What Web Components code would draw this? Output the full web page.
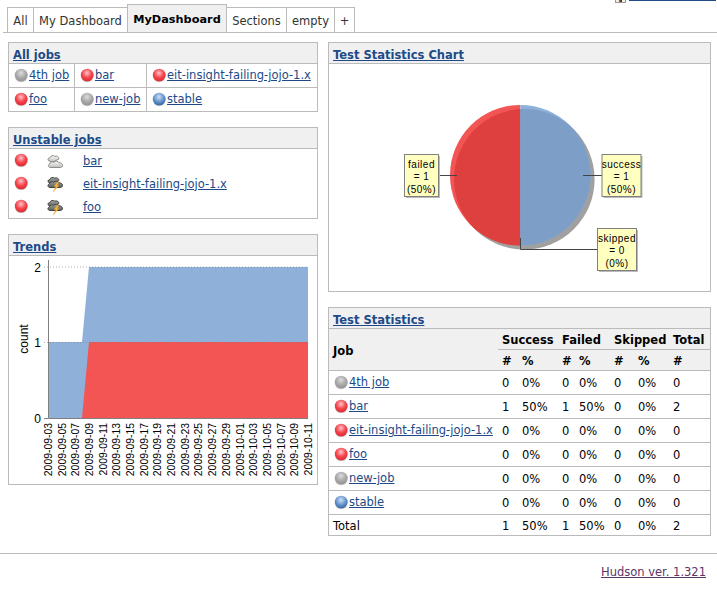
<!DOCTYPE html>
<html><head><meta charset="utf-8"><title>MyDashboard</title>
<style>
html,body{margin:0;padding:0;background:#fff;overflow:hidden}
body{font:11.5px "DejaVu Sans",sans-serif;color:#000;--link:#204a87;--line:#bbb;--head:#f0f0f0}
</style></head>
<body>
<hudson-page></hudson-page>
<script>
const BALLS={red:['#ffc4c8','#f6464e','#e0242c'],grey:['#dcdcdc','#ababab','#929292'],blue:['#cfe0f5','#6a98d0','#2f62a6']};
let uid=0;
function ball(c){const[a,b,d]=BALLS[c];const id='b'+(uid++);
return `<svg class="ball" width="16" height="16" viewBox="0 0 16 16"><defs><radialGradient id="${id}" cx=".48" cy=".34" r=".68"><stop offset="0" stop-color="${a}"/><stop offset=".55" stop-color="${b}"/><stop offset="1" stop-color="${d}"/></radialGradient></defs><ellipse cx="8.2" cy="9" rx="6.5" ry="6.2" fill="#888" opacity=".5"/><circle cx="8.2" cy="8" r="6.3" fill="url(#${id})"/></svg>`;}
class HBall extends HTMLElement{connectedCallback(){this.attachShadow({mode:'open'}).innerHTML=`<style>:host{display:inline-block;width:16px;height:16px;vertical-align:middle}svg{display:block}</style>${ball(this.getAttribute('color'))}`;}}
class HWeather extends HTMLElement{connectedCallback(){const storm=this.getAttribute('kind')==='storm';
const top=storm?'#a4a4a2':'#fbfbfb',bot=storm?'#5c5c5a':'#bcbcb8',st=storm?'#454543':'#8c8c88';
const cloud=storm
?`<path d="M2 6.8C.4 6 .8 3.6 2.8 3.6 3.4 1.4 6.4.7 7.8 2.2 9.8 1.2 12.2 2.6 11.8 4.8L6 8Z" fill="url(#c)" stroke="${st}"/><path d="M3 11.5C.8 11.5.2 8.8 2.2 8 2.6 6 5.2 5.2 6.6 6.4 8 4.6 11 5 11.6 6.8 13.6 6.4 15.8 7.8 15.5 9.8 15.3 10.9 14.4 11.5 13.4 11.5Z" fill="url(#c)" stroke="${st}"/><path d="M10 6.4 7 10.6 9 10.6 6.2 15.8 12 9.4 10 9.4 11.8 6.4Z" fill="#f8b838" stroke="#e09a20" stroke-width=".4"/>`
:`<path d="M2 8C.4 7.2.8 4.8 2.8 4.8 3.4 2.6 6.4 1.9 7.8 3.4 9.8 2.4 12.2 3.8 11.8 6L6 9Z" fill="url(#c)" stroke="${st}"/><path d="M3.4 14.5C1.2 14.5.6 11.8 2.6 11 3 9 5.6 8.2 7 9.4 8.4 7.6 11.4 8 12 9.8 13.8 9.4 15.8 10.8 15.5 12.8 15.3 13.9 14.4 14.5 13.4 14.5Z" fill="url(#c)" stroke="${st}"/>`;
this.attachShadow({mode:'open'}).innerHTML=`<style>:host{display:inline-block;width:16px;height:16px;vertical-align:middle}svg{display:block}</style>
<svg width="16" height="16" viewBox="0 0 16 16"><defs><linearGradient id="c" x1="0" y1="0" x2="0" y2="1"><stop offset="0" stop-color="${top}"/><stop offset="1" stop-color="${bot}"/></linearGradient></defs>${cloud}</svg>`;}}
class HPortlet extends HTMLElement{connectedCallback(){this.attachShadow({mode:'open'}).innerHTML=`<style>
:host{display:block;border:1px solid var(--line);box-sizing:border-box;background:#fff}
header{height:20px;line-height:24px;background:var(--head);border-bottom:1px solid var(--line);padding:0 4px;font-weight:bold}
a{color:var(--link)}
</style><header><a href="#">${this.getAttribute('title')}</a></header><slot></slot>`;}}
class HTabs extends HTMLElement{connectedCallback(){
const tabs=[['All',26],['My Dashboard',94],['MyDashboard',100,1],['Sections',60],['empty',48],['+',21]];
this.attachShadow({mode:'open'}).innerHTML=`<style>
:host{display:flex;align-items:flex-end;height:28px;margin:1px 0 0 3px;padding-left:4px;border-bottom:1px solid var(--line);box-sizing:content-box;color:#333}
div{box-sizing:border-box;height:25px;line-height:27px;text-align:center;border:1px solid var(--line);border-bottom:0;border-right:0}
div:last-child{border-right:1px solid var(--line)}
div.on{height:28px;line-height:30px;background:var(--head);font-weight:bold;font-size:11.3px;color:#000;border:1px solid var(--line);border-bottom:0;margin-right:-1px;position:relative}
</style>${tabs.map(t=>`<div class="${t[2]?'on':''}" style="width:${t[1]}px">${t[0]}</div>`).join('')}`;}}
const CS=`a{color:var(--link)}table{border-collapse:separate;border-spacing:0;width:100%;table-layout:fixed}td,th{padding:0 4px;box-sizing:border-box;white-space:nowrap;overflow:visible}hudson-ball{margin-top:-1px}`;
class HJobGrid extends HTMLElement{connectedCallback(){
const rows=[[['grey','4th job'],['red','bar'],['red','eit-insight-failing-jojo-1.x']],[['red','foo'],['grey','new-job'],['blue','stable']]];
this.attachShadow({mode:'open'}).innerHTML=`<style>:host{display:block}${CS}
td{height:24px;border-bottom:1px solid var(--line);border-right:1px solid var(--line)}
td:last-child{border-right:0}tr:last-child td{border-bottom:0;height:23px}
</style><table><colgroup><col style="width:66px"><col style="width:72px"><col></colgroup>${rows.map(r=>`<tr>${r.map(c=>`<td><hudson-ball color="${c[0]}"></hudson-ball><a href="#">${c[1]}</a></td>`).join('')}</tr>`).join('')}</table>`;}}
class HUnstable extends HTMLElement{connectedCallback(){
const rows=[['cloud','bar'],['storm','eit-insight-failing-jojo-1.x'],['storm','foo']];
this.attachShadow({mode:'open'}).innerHTML=`<style>:host{display:block}${CS}td{height:23px}</style><table><colgroup><col style="width:34px"><col style="width:36px"><col></colgroup>${rows.map(r=>`<tr><td><hudson-ball color="red"></hudson-ball></td><td><hudson-weather kind="${r[0]}"></hudson-weather></td><td><a href="#">${r[1]}</a></td></tr>`).join('')}</table>`;}}
class HStats extends HTMLElement{connectedCallback(){
const z=['0','0%','0','0%','0','0%','0'];
const rows=[['grey','4th job',z],['red','bar',['1','50%','1','50%','0','0%','2']],['red','eit-insight-failing-jojo-1.x',z],['red','foo',z],['grey','new-job',z],['blue','stable',z]];
this.attachShadow({mode:'open'}).innerHTML=`<style>:host{display:block}${CS}
th{background:var(--head);text-align:left;height:21px;padding-top:2px;border-bottom:1px solid var(--line)}
td{height:24px;border-bottom:1px solid var(--line)}
tr.total td{height:20px;padding-top:2px;border-bottom:0}
th.job{height:42px;padding-top:3px}
</style><table><colgroup><col style="width:169px"><col style="width:20px"><col style="width:40px"><col style="width:17px"><col style="width:35px"><col style="width:24px"><col style="width:35px"><col></colgroup>
<tr><th rowspan="2" class="job">Job</th><th colspan="2">Success</th><th colspan="2">Failed</th><th colspan="2">Skipped</th><th>Total</th></tr>
<tr><th>#</th><th>%</th><th>#</th><th>%</th><th>#</th><th>%</th><th>#</th></tr>
${rows.map(r=>`<tr><td><hudson-ball color="${r[0]}"></hudson-ball><a href="#">${r[1]}</a></td>${r[2].map(v=>`<td>${v}</td>`).join('')}</tr>`).join('')}
<tr class="total"><td>Total</td>${['1','50%','1','50%','0','0%','2'].map(v=>`<td>${v}</td>`).join('')}</tr></table>`;}}
class HTrend extends HTMLElement{connectedCallback(){
const d=[];for(let i=3;i<=29;i+=2)d.push('2009-09-'+String(i).padStart(2,'0'));for(let i=1;i<=11;i+=2)d.push('2009-10-'+String(i).padStart(2,'0'));
this.attachShadow({mode:'open'}).innerHTML=`<style>:host{display:block}svg{display:block}text{font-family:"Liberation Sans",sans-serif;fill:#000}</style>
<svg width="308" height="228" viewBox="9 256 308 228">
<polygon points="48,342 82,342 89,267 308,267 308,418 48,418" fill="#8fb0d9"/>
<polygon points="82,418 89,342 308,342 308,418" fill="#f35555"/>
<path d="M44 267H89M44 342.5H308M89 267H308" stroke="#777" stroke-dasharray="1 2" fill="none" stroke-width=".7" opacity=".8"/>
<path d="M48.5 260V418.5H308" stroke="#808080" fill="none"/>
<path d="M44 418.5H48" stroke="#808080"/>
<g font-size="12"><text x="41" y="272" text-anchor="end">2</text><text x="41" y="347" text-anchor="end">1</text><text x="41" y="423" text-anchor="end">0</text></g>
<text transform="translate(28,339) rotate(-90)" text-anchor="middle" font-size="12">count</text>
<g font-size="10.4">${d.map((s,i)=>`<text transform="translate(${(52+i*13.68).toFixed(2)},423) rotate(-90)" text-anchor="end">${s}</text>`).join('')}</g>
</svg>`;}}
class HPie extends HTMLElement{connectedCallback(){
const lab=(x,y,w,h,ls)=>`<rect x="${x+2}" y="${y+2}" width="${w}" height="${h}" fill="#bbb"/><rect x="${x+.5}" y="${y+.5}" width="${w}" height="${h}" fill="#ffffc0" stroke="#808080"/>`+ls.map((t,i)=>`<text x="${x+w/2+.5}" y="${y+13.5+i*12.5}" text-anchor="middle">${t}</text>`).join('');
this.attachShadow({mode:'open'}).innerHTML=`<style>:host{display:block}svg{display:block}text{font-family:"Liberation Sans",sans-serif;font-size:10px;letter-spacing:.5px;fill:#000}</style>
<svg width="381" height="227" viewBox="329 64 381 227">
<defs><clipPath id="pc"><circle cx="520.3" cy="175.3" r="70.3"/></clipPath><clipPath id="ps"><circle cx="524.3" cy="179.3" r="70.3"/></clipPath></defs>
<circle cx="524.3" cy="179.3" r="70.3" fill="#a0a0a0"/>
<path d="M520.3 105A70.3 70.3 0 0 0 520.3 245.6Z" fill="#f35555"/>
<path d="M520.3 105A70.3 70.3 0 0 1 520.3 245.6Z" fill="#8fb0d9"/>
<g clip-path="url(#pc)"><g clip-path="url(#ps)"><rect x="400" y="60" width="120.3" height="240" fill="#de4040"/><rect x="520.3" y="60" width="120" height="240" fill="#7c9ec7"/></g></g>
<path d="M439 175.5H457M583 175.5H602M520.5 238V249.5H597" stroke="#444" fill="none"/>
${lab(404,154,34,42,['failed','= 1','(50%)'])}
${lab(601.5,154,39,42,['success','= 1','(50%)'])}
${lab(597,228,39,42,['skipped','= 0','(0%)'])}
</svg>`;}}
class HPage extends HTMLElement{connectedCallback(){this.attachShadow({mode:'open'}).innerHTML=`<style>
:host{display:block}
.top{display:flex;justify-content:flex-end;height:3px;overflow:hidden;padding-right:1px}
.ico{width:11px;height:3px;border:1px solid #999;border-top:0;box-sizing:border-box;background:linear-gradient(90deg,#eee 35%,#a60 35%,#333 65%,#eee 65%);margin-right:3px}
.lnk{width:87px;height:1px;background:var(--link)}
main{display:grid;grid-template-columns:310px 383px;column-gap:10px;padding:9px 6px 0 8px;align-items:start}
.col{display:flex;flex-direction:column;gap:15px}
footer{margin-top:17px;border-top:1px solid var(--line);padding:11px 11px 0 0;text-align:right}
footer a{color:#5c3566}
</style>
<div class="top"><span class="ico"></span><span class="lnk"></span></div>
<hudson-tabs></hudson-tabs>
<main>
<div class="col">
<hudson-portlet title="All jobs"><hudson-job-grid></hudson-job-grid></hudson-portlet>
<hudson-portlet title="Unstable jobs"><hudson-unstable></hudson-unstable></hudson-portlet>
<hudson-portlet title="Trends"><hudson-trend></hudson-trend></hudson-portlet>
</div>
<div class="col">
<hudson-portlet title="Test Statistics Chart"><hudson-pie></hudson-pie></hudson-portlet>
<hudson-portlet title="Test Statistics"><hudson-stats></hudson-stats></hudson-portlet>
</div>
</main>
<footer><a href="#">Hudson ver. 1.321</a></footer>`;}}
customElements.define('hudson-ball',HBall);
customElements.define('hudson-weather',HWeather);
customElements.define('hudson-portlet',HPortlet);
customElements.define('hudson-tabs',HTabs);
customElements.define('hudson-job-grid',HJobGrid);
customElements.define('hudson-unstable',HUnstable);
customElements.define('hudson-stats',HStats);
customElements.define('hudson-trend',HTrend);
customElements.define('hudson-pie',HPie);
customElements.define('hudson-page',HPage);
</script>
</body></html>
